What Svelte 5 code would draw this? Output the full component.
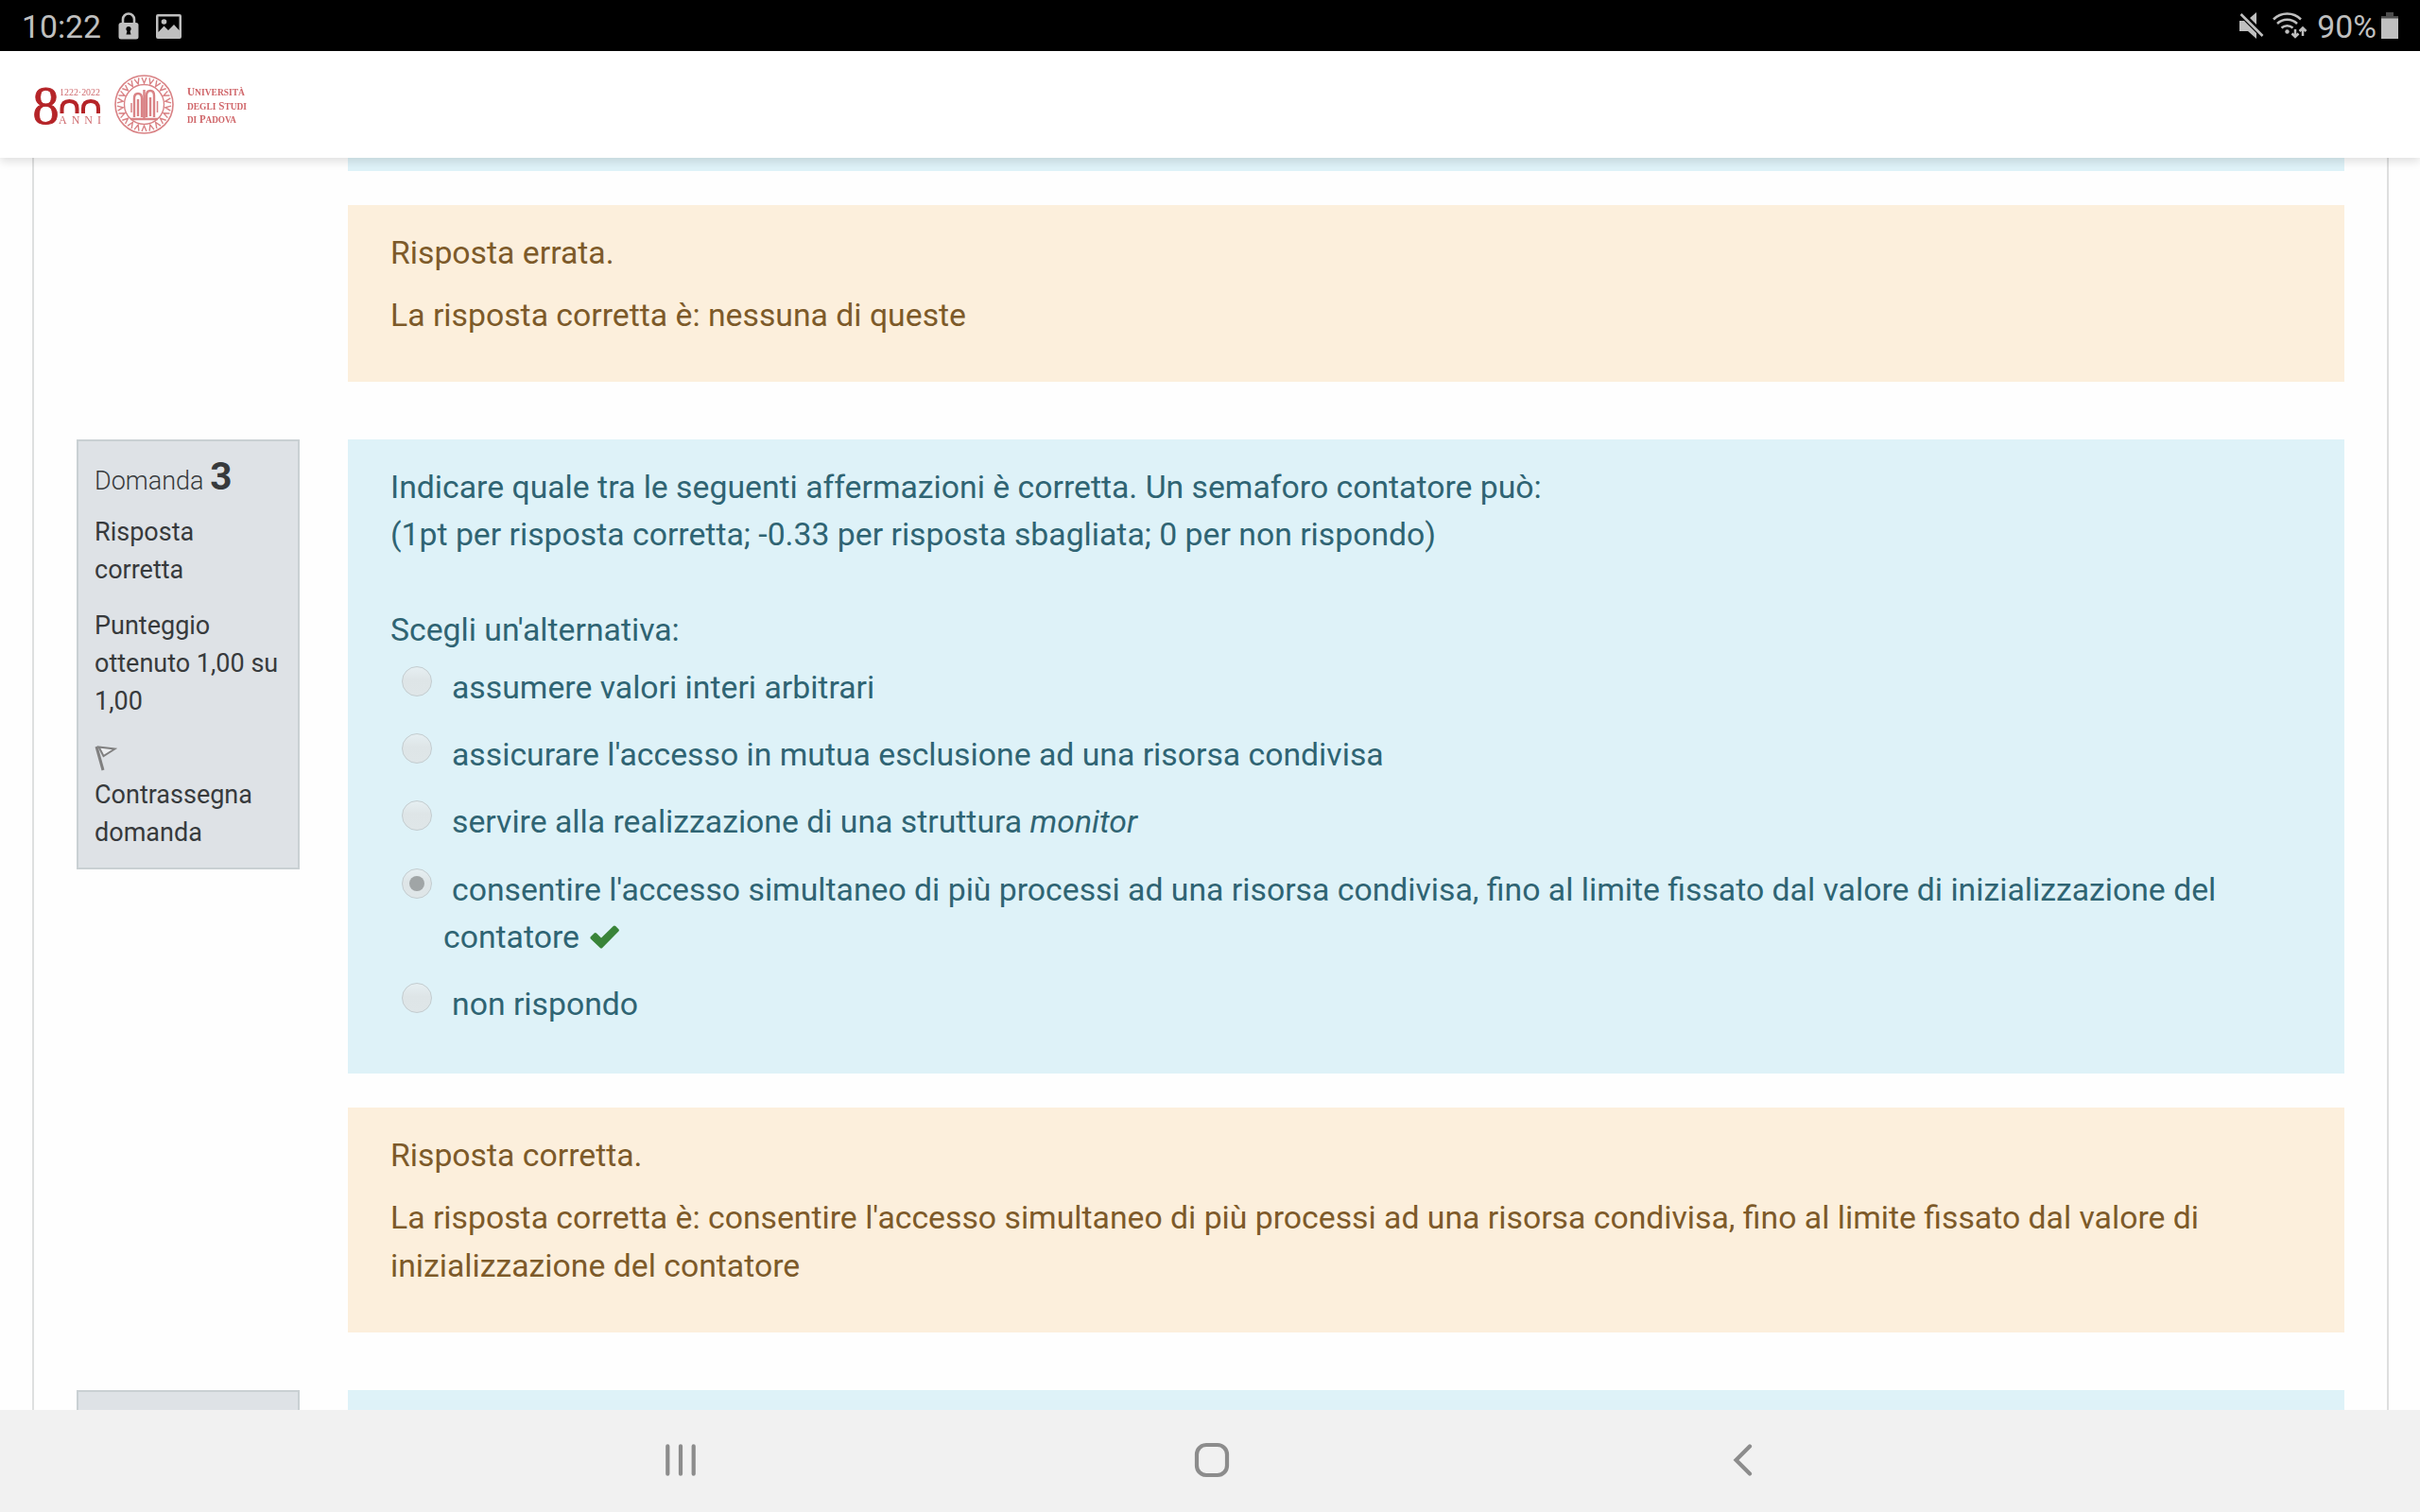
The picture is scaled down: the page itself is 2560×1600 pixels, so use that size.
<script>
  const options = [
    { text: 'assumere valori interi arbitrari' },
    { text: "assicurare l'accesso in mutua esclusione ad una risorsa condivisa" },
    { text: 'servire alla realizzazione di una struttura ', em: 'monitor' },
    {
      text: "consentire l'accesso simultaneo di più processi ad una risorsa condivisa, fino al limite fissato dal valore di inizializzazione del contatore",
      checked: true
    },
    { text: 'non rispondo' }
  ];
  const ticks = Array.from({ length: 22 }, (_, i) => (i * 360) / 22);
</script>

<div class="screen">
  <div class="status">
    <div class="side">
      <span class="clock">10:22</span>
      <svg class="lock" width="22" height="29" viewBox="0 0 22 29">
        <path d="M5 12V7.500a6 6 0 0 1 12 0V12" fill="none" stroke="#bfbfbf" stroke-width="2.600" />
        <rect x="0.500" y="11" width="21" height="17.500" rx="2.500" fill="#bfbfbf" />
        <circle cx="11" cy="17.500" r="2.600" fill="#000" />
        <path d="M10 18h2l1.500 5.500h-5z" fill="#000" />
      </svg>
      <svg class="photo" width="27" height="26" viewBox="0 0 27 26">
        <path fill-rule="evenodd" fill="#bfbfbf" d="M2 0h23a2 2 0 0 1 2 2v22a2 2 0 0 1-2 2H2a2 2 0 0 1-2-2V2a2 2 0 0 1 2-2zM2.500 2.500V19l6-6.500 4.500 4.500 6-6 5.500 6V2.500z" />
        <circle cx="8.500" cy="8" r="2.800" fill="#bfbfbf" />
      </svg>
    </div>
    <div class="side">
      <svg class="mute" width="26" height="28" viewBox="0 0 26 28">
        <path d="M0 9h5l13 13v6l-9-8H0zM11 6l7-6v13z" fill="#bfbfbf" />
        <path d="M3 0.500l23 23" stroke="#000" stroke-width="2.500" />
        <path d="M1.500 2l23 23" stroke="#bfbfbf" stroke-width="2.600" />
      </svg>
      <svg class="wifi" width="37" height="28" viewBox="0 0 37 28">
        <g fill="none" stroke="#bfbfbf" stroke-width="2.500">
          <path d="M1 7.500a20.500 20.500 0 0 1 29 0" />
          <path d="M5 12a15 15 0 0 1 21 0" />
          <path d="M9.500 16.500a9 9 0 0 1 12 0" />
          <path d="M24 18v8M20.500 22.500l3.500 3.500 3.500-3.500M32 25v-8M28.500 20l3.500-3.500 3.500 3.500" />
        </g>
        <circle cx="15.500" cy="20.500" r="2.200" fill="#bfbfbf" />
      </svg>
      <span class="percent">90%</span>
      <svg class="battery" width="18" height="28" viewBox="0 0 18 28">
        <path d="M5 0h8v4h5v3H0V4h5z" fill="#4d4d4d" />
        <path d="M0 6.500h18V28H0z" fill="#bfbfbf" />
      </svg>
    </div>
  </div>

  <header>
    <svg class="logo" width="240" height="80" viewBox="0 0 240 80">
      <g class="years">
        <text x="-0.500" y="53.500" class="eight" textLength="28" lengthAdjust="spacingAndGlyphs">8</text>
        <path d="M30.500 43V38q0-8 8-8t8 8v5M53 43v-5q0-8 8-8t8 8v5" fill="none" stroke="#b52428" stroke-width="4" />
        <text x="28" y="24" class="tiny" textLength="43" lengthAdjust="spacingAndGlyphs">1222·2022</text>
        <text x="27" y="53.500" class="tiny anni" textLength="45">ANNI</text>
      </g>
      <g class="seal" fill="none" stroke="#d98285">
        <circle cx="117.500" cy="33.500" r="30.500" stroke-width="1.600" />
        <circle cx="117.500" cy="33.500" r="21" stroke-width="1.400" />
        {#each ticks as angle}
          <path d="M115 5l2.500 6 2.500-6" stroke-width="1.400" transform="rotate({angle} 117.5 33.5)" />
        {/each}
        <path d="M107 47V27q0-5 4-5t4 5v20M120 47V24q0-5 4-5t4 5v23M103 49h29M111 28v18M124 26v20M117.500 18v30" stroke-width="2.400" />
        <path d="M104 32v10M131.500 30v12" stroke-width="1.500" />
      </g>
      <g class="name">
        <text x="163" y="24" textLength="61" lengthAdjust="spacingAndGlyphs">U<tspan class="sc">NIVERSITÀ</tspan></text>
        <text x="163" y="38.700" textLength="63" lengthAdjust="spacingAndGlyphs"><tspan class="sc">DEGLI</tspan> S<tspan class="sc">TUDI</tspan></text>
        <text x="163" y="53.300" textLength="52" lengthAdjust="spacingAndGlyphs"><tspan class="sc">DI</tspan> P<tspan class="sc">ADOVA</tspan></text>
      </g>
    </svg>
  </header>

  <main>
    <div class="card">
      <section class="question first">
        <div class="content">
          <div class="formulation sliver"></div>
          <div class="feedback">
            <p>Risposta errata.</p>
            <p>La risposta corretta è: nessuna di queste</p>
          </div>
        </div>
      </section>

      <section class="question">
        <aside class="info">
          <h3>Domanda <b>3</b></h3>
          <p>Risposta corretta</p>
          <p>Punteggio ottenuto 1,00 su 1,00</p>
          <div class="flag">
            <svg width="24" height="27" viewBox="0 0 24 27">
              <path d="M2 1l7 25" stroke="#808080" stroke-width="3" />
              <path d="M4.500 1.500L21.500 3.500 9.500 11z" fill="#eceef0" stroke="#808080" stroke-width="2" />
            </svg>
            <span>Contrassegna domanda</span>
          </div>
        </aside>
        <div class="content">
          <div class="formulation">
            <p class="text">
              Indicare quale tra le seguenti affermazioni è corretta. Un semaforo contatore può:<br />
              (1pt per risposta corretta; -0.33 per risposta sbagliata; 0 per non rispondo)
            </p>
            <p class="prompt">Scegli un'alternativa:</p>
            <ul>
              {#each options as option}
                <li>
                  <span class="radio" class:checked={option.checked}></span>
                  <span class="label">{option.text}{#if option.em}<em>{option.em}</em>{/if}{#if option.checked}<svg class="check" width="31" height="25" viewBox="0 0 31 25"><path d="M0.800 12.200L4.600 8.500Q5.800 7.500 7 8.600L12 13.500 24.800 0.900Q26 0 27.200 1L30.400 4.200Q31.400 5.400 30.400 6.600L13.200 24Q12 25 10.800 24L0.800 14.400Q0 13.300 0.800 12.200z" fill="#398439" /></svg>{/if}</span>
                </li>
              {/each}
            </ul>
          </div>
          <div class="feedback">
            <p>Risposta corretta.</p>
            <p>La risposta corretta è: consentire l'accesso simultaneo di più processi ad una risorsa condivisa, fino al limite fissato dal valore di inizializzazione del contatore</p>
          </div>
        </div>
      </section>

      <section class="question">
        <aside class="info"></aside>
        <div class="content"><div class="formulation"></div></div>
      </section>
    </div>
  </main>

  <nav>
    <svg width="34" height="34" viewBox="0 0 34 34"><path d="M3.300 2.300v29.400M17 2.300v29.400M30.700 2.300v29.400" /></svg>
    <svg width="38" height="38" viewBox="0 0 38 38"><rect x="3" y="3" width="32" height="32" rx="10" /></svg>
    <svg width="34" height="34" viewBox="0 0 34 34"><path d="M24 2.500L9.500 17 24 31.500" /></svg>
  </nav>
</div>

<style>
  :global(body) { background: #fff; }
  * { box-sizing: border-box; }
  p, h3, ul { margin: 0; padding: 0; }
  .screen {
    width: 2560px;
    height: 1600px;
    display: flex;
    flex-direction: column;
    overflow: hidden;
    background: #fefefe;
    font-family: Roboto, sans-serif;
    font-size: 33.75px;
    line-height: 50.3px;
  }
  .status {
    flex: none;
    height: 54px;
    padding: 0 23px;
    display: flex;
    justify-content: space-between;
    background: #000;
    color: #bfbfbf;
    line-height: 57px;
  }
  .side { display: flex; align-items: flex-start; }
  .lock { margin: 13px 0 0 18px; }
  .photo { margin: 15px 0 0 18px; }
  .mute { margin: 13px 9px 0 0; }
  .wifi { margin: 13px 10px 0 0; }
  .battery { margin: 13px 0 0 5px; }

  header {
    flex: none;
    height: 113px;
    padding: 23px 35px;
    background: #fff;
    box-shadow: 0 4px 9px rgba(0, 0, 0, 0.12);
    position: relative;
    z-index: 1;
  }
  .logo { display: block; font-family: 'Liberation Serif', serif; filter: blur(0.5px); }
  .eight { font-size: 56px; fill: #b52428; stroke: #b52428; stroke-width: 0.800; }
  .tiny { font-size: 11px; fill: #cf6b6f; }
  .anni { font-size: 12px; }
  .name { font-size: 13px; font-weight: 700; fill: #cf6468; }
  .sc { font-size: 11px; }

  main { flex: 1; min-height: 0; padding: 0 33px 0 34px; overflow: hidden; }
  .card { border: solid #dedfdf; border-width: 0 2px; padding: 0 45px; }
  .question {
    display: grid;
    grid-template-columns: 236px 2112px;
    column-gap: 51px;
    align-items: start;
    margin-bottom: 61px;
  }
  .content { grid-column: 2; }
  .formulation { background: #def2f8; color: #2f6473; padding: 25.800px 45px 26.800px; }
  .sliver { height: 14px; padding: 0; }
  .feedback {
    margin-top: 36px;
    padding: 26px 45px 44.800px;
    background: #fcefdc;
    color: #7d5a29;
  }
  .feedback p + p { margin-top: 16px; }
  .prompt { margin-top: 50.300px; }
  ul { list-style: none; margin-top: 10.600px; }
  li { display: flex; align-items: flex-start; margin-bottom: 20.900px; }
  .radio {
    flex: none;
    width: 32px;
    height: 32px;
    margin: 2px 12px 0;
    border: 1px solid #c3cccf;
    border-radius: 50%;
    background: linear-gradient(#e6eff2, #dee5e7 45%, #dfe6e8);
    display: grid;
    place-items: center;
  }
  .checked::after {
    content: '';
    width: 16px;
    height: 16px;
    border-radius: 50%;
    background: #a0a5a6;
  }
  .label { text-indent: 9px; }
  .check { margin-left: 11px; vertical-align: -1px; }

  .info {
    padding: 11px 17px 17px;
    min-height: 80px;
    background: #dee2e6;
    border: 2px solid #c9d0d3;
    color: #373a3c;
    font-size: 27px;
    line-height: 40px;
  }
  h3 { margin-bottom: 8px; font-size: 27px; font-weight: 300; line-height: 52px; }
  b { font-size: 40.500px; font-weight: 700; }
  .info p { margin-bottom: 18.500px; }
  .flag { padding-top: 9px; }
  .flag svg { display: block; margin-bottom: 5px; }
  .flag span { display: block; }

  nav {
    flex: none;
    height: 108px;
    padding: 0 699px 2px 703px;
    display: flex;
    align-items: center;
    justify-content: space-between;
    background: #f1f1f1;
  }
  nav svg { fill: none; stroke: #8c8c8c; stroke-width: 4.200; stroke-linecap: round; }
</style>
